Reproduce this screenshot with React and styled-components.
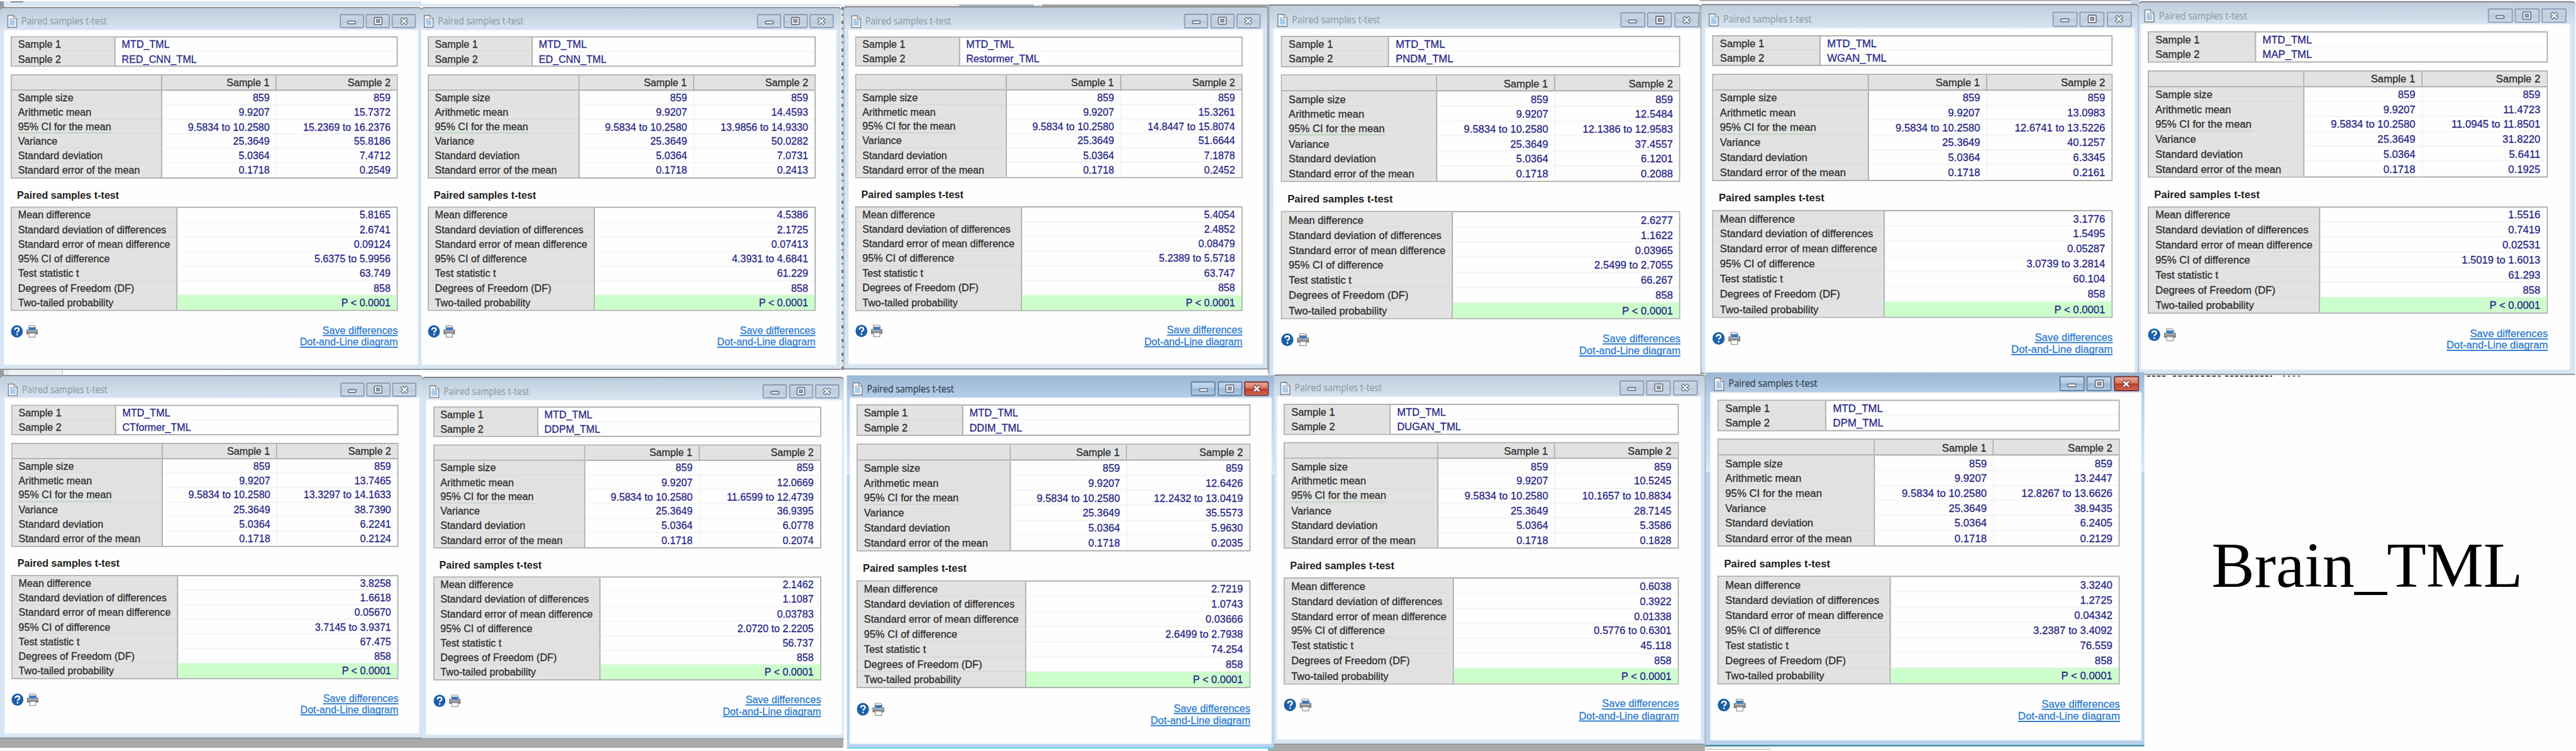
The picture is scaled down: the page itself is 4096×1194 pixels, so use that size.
import React from "react";
import styled, { createGlobalStyle, css } from "styled-components";

const K = 4096 / 4400;
const TABLE_W = 687;
const TABLE_H = 469;

const Global = createGlobalStyle`
  html, body { margin: 0; padding: 0; background: #fff; }
  * { box-sizing: border-box; }
`;

const Desktop = styled.main`
  position: relative;
  width: 4096px;
  height: 1194px;
  overflow: hidden;
  background: #fefefe;
  font-family: "Liberation Sans", Arial, sans-serif;
`;

const Strip = styled.div`
  position: absolute;
  left: ${(p) => p.$x * K}px;
  top: ${(p) => p.$y * K}px;
  width: ${(p) => p.$w * K}px;
  height: ${(p) => p.$h * K}px;
  background: ${(p) => p.$bg};
`;

const Frame = styled.section`
  position: absolute;
  left: 0;
  top: 0;
  width: ${(p) => p.$w}px;
  height: ${(p) => p.$h}px;
  transform-origin: 0 0;
  transform: translate(${(p) => p.$x}px, ${(p) => p.$y}px) scale(${(p) => p.$sx}, ${(p) => p.$sy});
  display: flex;
  flex-direction: column;
  padding: 0 ${(p) => p.$right}px ${(p) => p.$bottom}px ${(p) => p.$left}px;
  border-radius: ${(p) => (p.$active ? "0" : "5px 5px 0 0")};
  overflow: hidden;
  ${(p) =>
    p.$active
      ? css`
          background: linear-gradient(180deg, #9bb7d5 0, #b7cfe9 40px, #d3e2f5 150px, #dfeafb 163px, #b9d1ea 165px);
          box-shadow: inset 0 -2px 0 ${p.$edge};
        `
      : css`
          background: linear-gradient(180deg, #becddb 0, #d7e4f2 40px, #d7e4f2 100%);
          box-shadow: inset 0 2px 0 #818589, inset 0 -2px 0 #7f8386${p.$sides ? ", inset 1.5px 0 0 #a4adb6, inset -1.5px 0 0 #a4adb6" : ""};
        `}
`;

const TitleBar = styled.header`
  flex: none;
  height: ${(p) => p.$h}px;
  margin: 0 ${(p) => -p.$right}px 0 ${(p) => -p.$left}px;
  padding: 0 ${(p) => p.$padRight}px 3.4px ${(p) => p.$padLeft}px;
  display: flex;
  align-items: flex-end;
`;

const DocIcon = styled.svg`
  flex: none;
  width: 19.5px;
  height: 23px;
`;

const Title = styled.div`
  margin-left: 6.5px;
  height: 24.5px;
  line-height: 24px;
  font-family: "Open Sans", "Noto Sans", sans-serif;
  font-size: 17px;
  white-space: nowrap;
  transform: scaleX(0.91);
  transform-origin: 0 50%;
  -webkit-text-stroke: 0.25px currentColor;
  color: ${(p) => (p.$active ? "#33414f" : "#939da7")};
`;

const Buttons = styled.div`
  margin-left: auto;
  flex: none;
  display: flex;
  gap: 3.4px;
`;

const WinButton = styled.button`
  width: 43px;
  height: 24.5px;
  padding: 0;
  display: flex;
  align-items: center;
  justify-content: center;
  border-radius: 2.5px;
  border: 2px solid ${(p) => (p.$tone === "red" ? "#7a3338" : p.$tone === "blue" ? "#6780a0" : "#8a9cb3")};
  background: ${(p) =>
    p.$tone === "red"
      ? "linear-gradient(180deg, #e9a392 0, #d97a64 46%, #bf3720 50%, #d2694b 100%)"
      : p.$tone === "blue"
      ? "linear-gradient(180deg, #c6d9ee 0, #b3cbe5 46%, #98b6d6 50%, #b4cde8 100%)"
      : "linear-gradient(180deg, #c9d6e5 0, #c1cfdf 48%, #bccbdc 52%, #ccd9e8 100%)"};
  svg {
    width: 20px;
    height: 16px;
  }
`;

const Client = styled.div`
  flex: 1;
  min-height: 0;
  background: #fefefe;
  box-shadow: 0 0 0 1.5px rgba(238, 245, 252, 0.9);
  padding: 10.6px 0 0 ${(p) => p.$pad}px;
  font-size: 18px;
  -webkit-text-stroke: 0.3px currentColor;
  color: #2a2a2a;
`;

const Sheet = styled.div`
  width: ${TABLE_W}px;
`;

const Table = styled.div`
  display: grid;
  grid-template-columns: ${(p) => p.$cols};
  grid-template-rows: ${(p) => p.$rows || "none"};
  grid-auto-rows: 1fr;
  height: ${(p) => p.$h}px;
  margin-bottom: ${(p) => p.$gap || 0}px;
  border: 2px solid #adadad;
`;

const Cell = styled.div`
  display: flex;
  align-items: center;
  justify-content: ${(p) => (p.$right ? "flex-end" : "flex-start")};
  min-height: 0;
  padding: 1px 11px 0;
  line-height: 20px;
  white-space: nowrap;
  border-bottom: ${(p) => (p.$last ? "0" : "1.2px")} solid #ececec;
  color: #262687;
`;

const Label = styled(Cell)`
  background: #e2e2e2;
  color: #2a2a2a;
  border-bottom-color: #d3d3d3;
  border-right: 2px solid #adadad;
`;

const Head = styled(Cell)`
  background: #e2e2e2;
  color: #2a2a2a;
  border-bottom: 2px solid #adadad;
  border-right: ${(p) => (p.$last ? "0" : "2px")} solid #adadad;
`;

const Value = styled(Cell)`
  border-right: ${(p) => (p.$divide ? "1.5px" : "0")} solid #ececec;
  padding-right: ${(p) => (p.$divide ? 11.5 : 11)}px;
  background: ${(p) => (p.$green ? "#ccffcc" : "transparent")};
`;

const Hint = styled.span`
  line-height: 19px;
  box-shadow: 0 1.5px 0 #bfd8bf;
`;

const Heading = styled.h2`
  margin: 0;
  height: 48px;
  padding: 0 0 0 11px;
  line-height: 56px;
  font-size: 18px;
  font-weight: 700;
  -webkit-text-stroke: 0;
  color: #1d1d1d;
`;

const Footer = styled.footer`
  display: flex;
  justify-content: space-between;
  padding-top: 23.5px;
`;

const Tools = styled.div`
  display: flex;
  gap: 5px;
  svg {
    width: 22px;
    height: 22px;
  }
`;

const Links = styled.div`
  display: flex;
  flex-direction: column;
  align-items: flex-end;
  line-height: 19.8px;
`;

const Link = styled.a`
  color: #2a7ad0;
  text-decoration: underline;
  text-decoration-thickness: 1.5px;
  text-underline-offset: 2px;
  text-decoration-skip-ink: none;
  white-space: nowrap;
`;

const Caption = styled.div`
  position: absolute;
  left: ${3777.5 * K}px;
  top: ${905.5 * K}px;
  font-family: "Liberation Serif", "Times New Roman", serif;
  font-size: ${110 * K}px;
  line-height: ${121 * K}px;
  color: #000;
  white-space: nowrap;
`;

const Doc = () => (
  <DocIcon viewBox="0 0 20 23" preserveAspectRatio="none">
    <path d="M2 1.5H12L18 7V21.5H2Z" fill="#fbfcfd" stroke="#82898f" strokeWidth="1.8" />
    <path d="M12 1.5V7H18" fill="#e8edf2" stroke="#82898f" strokeWidth="1.4" />
    <path d="M5 6H10V9H15V18.5H5Z" fill="#a9cbea" />
  </DocIcon>
);

const MinGlyph = () => (
  <svg viewBox="0 0 20 16">
    <rect x="3.2" y="8" width="13.6" height="4.6" rx="1.2" fill="#f3f6f9" stroke="#6d7884" strokeWidth="1.9" />
  </svg>
);
const MaxGlyph = () => (
  <svg viewBox="0 0 20 16">
    <rect x="3.2" y="1.8" width="13.6" height="12.2" rx="1.2" fill="#f3f6f9" stroke="#6d7884" strokeWidth="1.9" />
    <rect x="7.4" y="5.6" width="5.2" height="4.4" fill="#aab4bf" stroke="#6d7884" strokeWidth="1.8" />
  </svg>
);
const CloseGlyph = ({ red }) => (
  <svg viewBox="0 0 20 16">
    <path d="M4.6 3L15.4 13M15.4 3L4.6 13" stroke={red ? "#7d4a4c" : "#6d7884"} strokeWidth="5.8" />
    <path d="M5.4 3.7L14.6 12.3M14.6 3.7L5.4 12.3" stroke="#f6f8fa" strokeWidth="2.6" />
  </svg>
);

const HelpIcon = () => (
  <svg viewBox="0 0 22 22">
    <circle cx="11" cy="11" r="10.5" fill="#1d5fa8" />
    <path d="M7.4 8.6C7.4 6.2 9 5 11.1 5C13.2 5 14.8 6.2 14.8 8.2C14.8 10.6 11.2 10.6 11.2 13.2" fill="none" stroke="#fff" strokeWidth="2.5" />
    <circle cx="11.2" cy="16.4" r="1.5" fill="#fff" />
  </svg>
);
const PrintIcon = () => (
  <svg viewBox="0 0 22 22">
    <path d="M5 6.5V1H15L17.2 3V6.5" fill="#f1f1f1" stroke="#a2a2a2" strokeWidth="1.3" />
    <rect x="5" y="4" width="12.4" height="5.4" fill="#3d78b4" />
    <path d="M0.8 9Q0.8 7.6 2.2 7.6H4.5V10H17.8V7.6H20Q21.3 7.6 21.3 9V16H0.8Z" fill="#7f8183" />
    <rect x="1.6" y="10.4" width="19" height="1.6" fill="#a9abad" />
    <path d="M5.6 14H16.6V21H5.6Z" fill="#fafafa" stroke="#8f8f8f" strokeWidth="1.3" />
  </svg>
);

const STAT_ROWS = ["Sample size", "Arithmetic mean", "95% CI for the mean", "Variance", "Standard deviation", "Standard error of the mean"];
const MTD = ["859", "9.9207", "9.5834 to 10.2580", "25.3649", "5.0364", "0.1718"];
const TEST_ROWS = [
  "Mean difference",
  "Standard deviation of differences",
  "Standard error of mean difference",
  "95% CI of difference",
  "Test statistic t",
  "Degrees of Freedom (DF)",
  "Two-tailed probability",
];

// table and outer: [left, top, right, bottom]; client: [left, right, bottom]
const WINDOWS = [
  { name: "RED_CNN_TML", table: [18.4, 62.4, 679.6, 531.4], outer: [0, 12, 720, 632], client: [8, 713.5, 622],
    stats: ["859", "15.7372", "15.2369 to 16.2376", "55.8186", "7.4712", "0.2549"],
    test: ["5.8165", "2.6741", "0.09124", "5.6375 to 5.9956", "63.749", "858"] },
  { name: "ED_CNN_TML", table: [730.3, 62.4, 1392.9, 531.4], outer: [720, 12, 1437, 632], client: [720, 1427.8, 622],
    stats: ["859", "14.4593", "13.9856 to 14.9330", "50.0282", "7.0731", "0.2413"],
    test: ["4.5386", "2.1725", "0.07413", "4.3931 to 4.6841", "61.229", "858"] },
  { name: "Restormer_TML", table: [1460.5, 62, 2122.1, 530.8], outer: [1440.6, 10.5, 2166, 631], client: [1449.9, 2156.5, 621.6], sides: true,
    stats: ["859", "15.3261", "14.8447 to 15.8074", "51.6644", "7.1878", "0.2452"],
    test: ["5.4054", "2.4852", "0.08479", "5.2389 to 5.5718", "63.747", "858"] },
  { name: "PNDM_TML", table: [2188.3, 60.9, 2870.3, 544.8], outer: [2167, 7.5, 2904.8, 649], client: [2176.4, 2904, 638.5], sides: true,
    stats: ["859", "12.5484", "12.1386 to 12.9583", "37.4557", "6.1201", "0.2088"],
    test: ["2.6277", "1.1622", "0.03965", "2.5499 to 2.7055", "66.267", "858"] },
  { name: "WGAN_TML", table: [2924.8, 59.8, 3608.8, 542.5], outer: [2904.6, 6.7, 3653.6, 639], client: [2913.9, 3645.1, 639], sides: true,
    stats: ["859", "13.0983", "12.6741 to 13.5226", "40.1257", "6.3345", "0.2161"],
    test: ["3.1776", "1.5495", "0.05287", "3.0739 to 3.2814", "60.104", "858"] },
  { name: "MAP_TML", table: [3668.6, 53.5, 4352, 535.8], outer: [3653.6, 2, 4399, 641], client: [3658, 4388.4, 630.5],
    stats: ["859", "11.4723", "11.0945 to 11.8501", "31.8220", "5.6411", "0.1925"],
    test: ["1.5516", "0.7419", "0.02531", "1.5019 to 1.6013", "61.293", "858"] },
  { name: "CTformer_TML", table: [19.3, 691.5, 680.5, 1160], outer: [0, 640.5, 721, 1261.5], client: [8.5, 715, 1251.7],
    stats: ["859", "13.7465", "13.3297 to 14.1633", "38.7390", "6.2241", "0.2124"],
    test: ["3.8258", "1.6618", "0.05670", "3.7145 to 3.9371", "67.475", "858"] },
  { name: "DDPM_TML", table: [739.8, 694.8, 1402.4, 1162.5], outer: [720.9, 643.5, 1441.2, 1263], client: [728.4, 1437.7, 1253.4],
    stats: ["859", "12.0669", "11.6599 to 12.4739", "36.9395", "6.0778", "0.2074"],
    test: ["2.1462", "1.1087", "0.03783", "2.0720 to 2.2205", "56.737", "858"] },
  { name: "DUGAN_TML", table: [2192.8, 689.3, 2867.8, 1168.8], outer: [2174.9, 639.5, 2912, 1272], client: [2181.3, 2903.6, 1261.9],
    stats: ["859", "10.5245", "10.1657 to 10.8834", "28.7145", "5.3586", "0.1828"],
    test: ["0.6038", "0.3922", "0.01338", "0.5776 to 0.6301", "45.118", "858"] },
  { name: "DDIM_TML", table: [1463, 691, 2135.7, 1175.6], outer: [1446.5, 641, 2176, 1279], client: [1452.3, 2170.6, 1269.5], active: true, edge: "#5ccfee",
    stats: ["859", "12.6426", "12.2432 to 13.0419", "35.5573", "5.9630", "0.2035"],
    test: ["2.7219", "1.0743", "0.03666", "2.6499 to 2.7938", "74.254", "858"] },
  { name: "DPM_TML", table: [2933.9, 682.6, 3621.1, 1168.8], outer: [2913.5, 636, 3663, 1274.5], client: [2922.7, 3656.3, 1263.5], active: true, edge: "#23818f",
    stats: ["859", "13.2447", "12.8267 to 13.6626", "38.9435", "6.2405", "0.2129"],
    test: ["3.3240", "1.2725", "0.04342", "3.2387 to 3.4092", "76.559", "858"] },
];

function ResultWindow({ name, table, outer, client, active, edge, sides, stats, test }) {
  const ux = (table[2] - table[0]) / TABLE_W;
  const uy = (table[3] - table[1]) / TABLE_H;
  const left = (client[0] - outer[0]) / ux;
  const right = (outer[2] - client[1]) / ux;
  return (
    <Frame
      $x={outer[0] * K}
      $y={outer[1] * K}
      $sx={ux * K}
      $sy={uy * K}
      $w={(outer[2] - outer[0]) / ux}
      $h={(outer[3] - outer[1]) / uy}
      $left={left}
      $right={right}
      $bottom={(outer[3] - client[2]) / uy}
      $active={active}
      $edge={edge}
      $sides={sides}
    >
      <TitleBar
        $h={(table[1] - outer[1]) / uy - 10.6}
        $left={left}
        $right={right}
        $padLeft={(table[0] - outer[0]) / ux - 7.5}
        $padRight={(outer[2] - table[2]) / ux - 32.3}
      >
        <Doc />
        <Title $active={active}>Paired samples t-test</Title>
        <Buttons>
          <WinButton $tone={active ? "blue" : "idle"} aria-label="Minimize"><MinGlyph /></WinButton>
          <WinButton $tone={active ? "blue" : "idle"} aria-label="Maximize"><MaxGlyph /></WinButton>
          <WinButton $tone={active ? "red" : "idle"} aria-label="Close"><CloseGlyph red={active} /></WinButton>
        </Buttons>
      </TitleBar>
      <Client $pad={(table[0] - client[0]) / ux}>
        <Sheet>
          <Table $cols="184px 1fr" $h={51.8} $gap={12.7}>
            <Label>Sample 1</Label>
            <Value>MTD_TML</Value>
            <Label $last>Sample 2</Label>
            <Value $last>{name}</Value>
          </Table>
          <Table $cols="267px 203px 1fr" $rows="26px" $h={178}>
            <Head />
            <Head $right>Sample 1</Head>
            <Head $right $last>Sample 2</Head>
            {STAT_ROWS.map((label, i) => (
              <React.Fragment key={label}>
                <Label $last={i === 5}>{i === 2 ? <Hint>{label}</Hint> : label}</Label>
                <Value $right $divide $last={i === 5}>{MTD[i]}</Value>
                <Value $right $last={i === 5}>{stats[i]}</Value>
              </React.Fragment>
            ))}
          </Table>
          <Heading>Paired samples t-test</Heading>
          <Table $cols="294px 1fr" $h={178.5}>
            {TEST_ROWS.map((label, i) => (
              <React.Fragment key={label}>
                <Label $last={i === 6}>{label}</Label>
                <Value $right $last={i === 6} $green={i === 6}>{i === 6 ? "P < 0.0001" : test[i]}</Value>
              </React.Fragment>
            ))}
          </Table>
          <Footer>
            <Tools>
              <HelpIcon />
              <PrintIcon />
            </Tools>
            <Links>
              <Link>Save differences</Link>
              <Link>Dot-and-Line diagram</Link>
            </Links>
          </Footer>
        </Sheet>
      </Client>
    </Frame>
  );
}

const STRIPS = [
  [0, 2.5, 7, 12, "#9a9a9a"],
  [6, 2.5, 714, 8, "#d9e6f4"],
  [18, 2.5, 22, 2, "#8d8d8d"],
  [720, 6.5, 717, 4, "#dce9f6"],
  [1441, 7, 725, 3.5, "#e8e8e6"],
  [1638, 8, 128, 3, "#a9b8c9"],
  [1780, 7, 387, 4, "#a5a5a2"],
  [2167, 7, 17, 4, "#a5a5a2"],
  [2904, 0, 750, 2, "#b4b4b4"],
  [3640, 0, 15, 8, "#c4d3e2"],
  [0, 631, 6, 13, "#9a9a9a"],
  [6, 632, 9, 9, "#d9e6f4"],
  [15, 633, 92, 7, "#f0f0f0"],
  [106, 633, 1.5, 6, "#b5b5b5"],
  [1437, 12, 4, 620, "repeating-linear-gradient(180deg, #6b6f75 0 5px, #dcdcd8 5px 11px, #8c8f95 11px 14px, #e9ddc8 14px 22px)"],
  [2166, 12, 2, 625, "#8b8f94"],
  [0, 1260, 720, 17, "#a9a9a9"],
  [718, 1262, 723, 15.5, "#a9a9a9"],
  [2166, 1271, 746, 12, "#a9a9a9"],
  [2911, 640, 3, 636, "#a8adb2"],
  [2914, 1274, 110, 6, "#f1f1f1"],
  [2914, 1279.5, 111, 1.5, "#bdbdbd"],
  [3667, 641, 35, 3, "repeating-linear-gradient(90deg, #444 0 5px, #e8e8e8 5px 8px)"],
  [3711, 641, 82, 3, "repeating-linear-gradient(90deg, #444 0 5px, #e0e0e0 5px 9px)"],
  [3801, 641, 80, 3, "repeating-linear-gradient(90deg, #444 0 5px, #e8e8e8 5px 8px)"],
  [3899, 641, 32, 3, "repeating-linear-gradient(90deg, #666 0 3px, #f0f0f0 3px 8px)"],
];

export default function App() {
  return (
    <>
      <Global />
      <Desktop>
        {STRIPS.map(([x, y, w, h, bg]) => (
          <Strip key={`${x}-${y}`} $x={x} $y={y} $w={w} $h={h} $bg={bg} />
        ))}
        {WINDOWS.map((w) => (
          <ResultWindow key={w.name} {...w} />
        ))}
        <Caption>Brain_TML</Caption>
      </Desktop>
    </>
  );
}
